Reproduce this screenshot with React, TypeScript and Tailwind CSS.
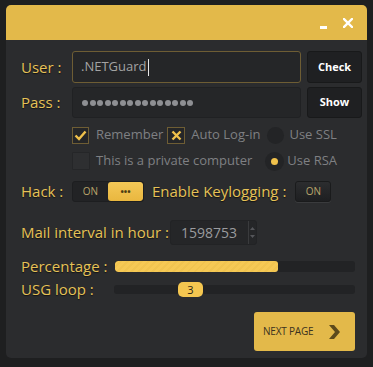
import React from "react";

const font = { fontFamily: '"Open Sans", "Noto Sans", sans-serif' };

function Label({ children, w }: { children: React.ReactNode; w?: string }) {
  return (
    <span
      className={`text-[15px] leading-none text-[#e6c257] [text-shadow:0_1px_1px_rgba(0,0,0,0.6)] whitespace-nowrap ${w ?? ""}`}
    >
      {children}
    </span>
  );
}

export default function App() {
  return (
    <div className="w-[373px] h-[367px] bg-[#1e1f20] pt-[5px] pl-[6px]" style={font}>
      <div className="w-[361px] h-[353px] rounded-[5px] overflow-hidden bg-[#2b2c2e] flex flex-col">
        {/* title bar */}
        <div className="h-[35px] bg-[#e3b94a] flex items-center justify-end pr-[14px] gap-[16px] shrink-0">
          <div className="w-[7px] h-[3px] bg-white mt-[10px]" />
          <svg width="10" height="10" viewBox="0 0 10 10" className="mt-[1px]">
            <path d="M1 1 L9 9 M9 1 L1 9" stroke="white" strokeWidth="2.4" strokeLinecap="square" />
          </svg>
        </div>

        <div className="flex flex-col pl-[15px]">
          {/* user */}
          <div className="flex items-center h-[32px] mt-[11px]">
            <Label w="w-[51px]">User :</Label>
            <div className="w-[229px] h-[32px] rounded-[3px] border border-[#6e5d34] bg-[#252628] flex items-center pl-[8px] text-[13px] text-[#a3a3a3]">
              .NETGuard<span className="inline-block w-[1px] h-[17px] bg-[#e8e8e8] ml-[1px]" />
            </div>
            <button className="ml-[6px] w-[55px] h-[32px] rounded-[3px] bg-[#1f2022] border border-[#18191a] text-white text-[11px] font-bold">
              Check
            </button>
          </div>
          {/* pass */}
          <div className="flex items-center h-[31px] mt-[4px]">
            <Label w="w-[51px]">Pass :</Label>
            <div className="w-[229px] h-[31px] rounded-[3px] border border-[#202123] bg-[#252628] flex items-center pl-[9px] gap-[1.5px]">
              {Array.from({ length: 15 }).map((_, i) => (
                <span key={i} className="w-[6px] h-[6px] rounded-full bg-[#8e8f93]" />
              ))}
            </div>
            <button className="ml-[6px] w-[55px] h-[31px] rounded-[3px] bg-[#1f2022] border border-[#18191a] text-white text-[11px] font-bold">
              Show
            </button>
          </div>
          {/* checkbox row 1 */}
          <div className="flex items-center h-[18px] mt-[8px] pl-[51px] text-[13px] text-[#7f8083]">
            <span className="w-[17px] h-[17px] border border-[#6e5d34] bg-[#252628] flex items-center justify-center">
              <svg width="13" height="11" viewBox="0 0 13 11">
                <path d="M1.5 5.5 L5 9 L11.5 1.5" stroke="#f0c14b" strokeWidth="2.4" fill="none" />
              </svg>
            </span>
            <span className="ml-[7px]">Remember</span>
            <span className="ml-[4px] w-[18px] h-[17px] border border-[#6e5d34] bg-[#252628] flex items-center justify-center">
              <svg width="11" height="11" viewBox="0 0 11 11">
                <path d="M1.5 1.5 L9.5 9.5 M9.5 1.5 L1.5 9.5" stroke="#f0c14b" strokeWidth="2.4" />
              </svg>
            </span>
            <span className="ml-[6px]">Auto Log-in</span>
            <span className="ml-[7px] w-[17px] h-[17px] rounded-full bg-[#232426]" />
            <span className="ml-[5px]">Use SSL</span>
          </div>
          {/* checkbox row 2 */}
          <div className="flex items-center h-[18px] mt-[8px] pl-[51px] text-[13px] text-[#7f8083]">
            <span className="w-[18px] h-[18px] border border-[#252628] bg-[#2e2f31] rounded-[1px]" />
            <span className="ml-[6px]">This is a private computer</span>
            <span className="ml-[13px] w-[19px] h-[19px] rounded-full bg-[#232426] flex items-center justify-center">
              <span className="w-[7px] h-[7px] rounded-full bg-[#f0c14b]" />
            </span>
            <span className="ml-[3px]">Use RSA</span>
          </div>
          {/* hack row */}
          <div className="flex items-center h-[21px] mt-[11px]">
            <Label w="w-[51px]">Hack :</Label>
            <div className="flex w-[72px] h-[21px] rounded-[3px] overflow-hidden bg-[#222325] border border-[#1d1e20]">
              <span className="w-[35px] flex items-center justify-center text-[10px] text-[#b9a56a]">ON</span>
              <span className="flex-1 rounded-[3px] bg-[linear-gradient(#f4c857,#e9b73f)] flex items-center justify-center text-[#4a3b12] text-[9px] font-bold leading-none">
                •••
              </span>
            </div>
            <Label w="ml-[8px]">Enable Keylogging :</Label>
            <span className="ml-[9px] w-[36px] h-[21px] rounded-[3px] bg-[linear-gradient(#2c2d2f,#1e1f21)] border border-[#1a1b1c] shadow-[0_1px_0_#3a3b3d] flex items-center justify-center text-[10px] text-[#b9a56a]">
              ON
            </span>
          </div>
          {/* mail */}
          <div className="flex items-center h-[25px] mt-[18px]">
            <Label w="w-[149px]">Mail interval in hour :</Label>
            <div className="w-[87px] h-[25px] rounded-[3px] bg-[#252628] border border-[#222325] flex items-center">
              <span className="flex-1 text-[14px] text-[#9a9b9e] pl-[10px]">1598753</span>
              <span className="w-[8px] h-full border-l border-[#3a3b3d] flex flex-col items-center justify-center gap-[5px]">
                <svg width="5" height="3" viewBox="0 0 5 3"><path d="M0 3 L2.5 0 L5 3Z" fill="#55565a" /></svg>
                <svg width="5" height="3" viewBox="0 0 5 3"><path d="M0 0 L2.5 3 L5 0Z" fill="#55565a" /></svg>
              </span>
            </div>
          </div>
          {/* percentage */}
          <div className="flex items-center h-[18px] mt-[12px]">
            <Label w="w-[94px]">Percentage :</Label>
            <div className="w-[240px] h-[11px] rounded-[3px] bg-[#222325] overflow-hidden">
              <div className="w-[163px] h-full rounded-[3px] bg-[repeating-linear-gradient(135deg,#f6c955_0px,#f6c955_3px,#f1c450_3px,#f1c450_5px)]" />
            </div>
          </div>
          {/* usg loop */}
          <div className="flex items-center h-[18px] mt-[5px]">
            <Label w="w-[93px]">USG loop :</Label>
            <div className="relative w-[241px] h-[9px] rounded-[3px] bg-[#222325]">
              <span className="absolute left-[64px] top-[-3px] w-[25px] h-[15px] rounded-[5px] bg-[#f4c650] flex items-center justify-center text-[11px] text-[#2a2210] leading-none">
                3
              </span>
            </div>
          </div>
          {/* next page */}
          <div className="flex justify-end pr-[12px] mt-[14px]">
            <button className="w-[101px] h-[39px] rounded-[3px] bg-[#e3b94a] flex items-center pl-[9px] text-[10px] text-[#3a3220] tracking-[-0.2px]">
              NEXT PAGE
              <svg width="12" height="14" viewBox="0 0 12 14" className="ml-[15px]">
                <path d="M1 0 L6 0 L12 7 L6 14 L1 14 L7 7 Z" fill="#5c4a1c" />
              </svg>
            </button>
          </div>
        </div>
      </div>
    </div>
  );
}
